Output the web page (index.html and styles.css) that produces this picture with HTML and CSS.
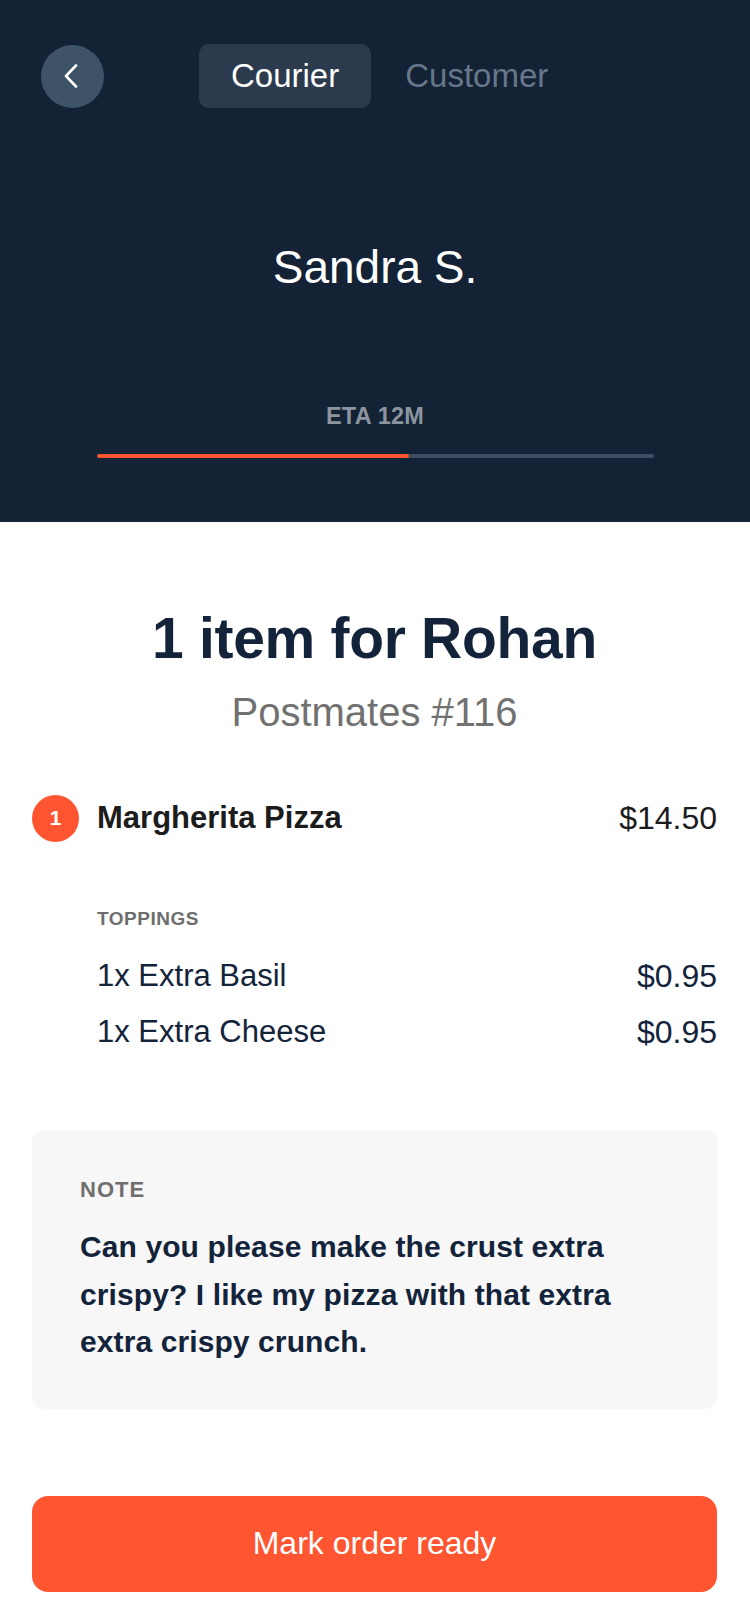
FILE: index.html
```html
<!DOCTYPE html>
<html lang="en">
<head>
<meta charset="utf-8">
<title>Order</title>
<link rel="stylesheet" href="styles.css">
</head>
<body>
<div class="screen">
  <header class="header">
    <div class="topbar">
      <button class="back" aria-label="Back">
        <svg width="16" height="24" viewBox="0 0 16 24"><path d="M13 1.5 L3 12 L13 22.5" fill="none" stroke="#ffffff" stroke-width="2.6" stroke-linecap="round" stroke-linejoin="round"/></svg>
      </button>
      <div class="tabs">
        <div class="tab active">Courier</div>
        <div class="tab">Customer</div>
      </div>
    </div>
    <div class="name">Sandra S.</div>
    <div class="eta">ETA 12M</div>
    <div class="progress"><div class="progress-fill" style="width:56%"></div></div>
  </header>

  <main class="main">
    <h1 class="title">1 item for Rohan</h1>
    <div class="subtitle">Postmates #116</div>

    <div class="item">
      <div class="badge">1</div>
      <div class="item-name">Margherita Pizza</div>
      <div class="item-price">$14.50</div>
    </div>

    <div class="toppings">
      <div class="section-label">TOPPINGS</div>
      <div class="topping"><span>1x Extra Basil</span><span class="tprice">$0.95</span></div>
      <div class="topping"><span>1x Extra Cheese</span><span class="tprice">$0.95</span></div>
    </div>

    <div class="note">
      <div class="note-label">NOTE</div>
      <p class="note-text">Can you please make the crust extra crispy? I like my pizza with that extra extra crispy crunch.</p>
    </div>

    <button class="cta">Mark order ready</button>
  </main>
</div>
</body>
</html>
```

FILE: styles.css
```css
* { box-sizing: border-box; }
html, body { margin: 0; padding: 0; }
body {
  font-family: "Liberation Sans", Arial, sans-serif;
  background: #ffffff;
  width: 750px;
}
.screen { width: 750px; min-height: 1624px; background: #fff; }

.header {
  background: #132234;
  height: 522px;
  padding-top: 44px;
}
.topbar {
  display: flex;
  align-items: center;
  padding-left: 41px;
  height: 64px;
}
.back {
  width: 63px;
  height: 63px;
  border-radius: 50%;
  background: #3e5368;
  border: none;
  padding: 0 4px 0 0;
  display: flex;
  align-items: center;
  justify-content: center;
}
.tabs {
  display: flex;
  gap: 2px;
  margin-left: 95px;
}
.tab {
  height: 64px;
  padding: 0 32px;
  border-radius: 10px;
  font-size: 33px;
  line-height: 64px;
  color: #66778a;
}
.tab.active {
  background: #2b3a4d;
  color: #ffffff;
}
.name {
  margin-top: 131px;
  text-align: center;
  color: #ffffff;
  font-size: 46px;
  line-height: 56px;
}
.eta {
  margin-top: 106px;
  text-align: center;
  color: #8b949f;
  font-size: 23.5px;
  font-weight: 700;
  line-height: 30px;
  letter-spacing: 0.2px;
}
.progress {
  margin: 23px 96px 0 97px;
  height: 4px;
  border-radius: 2px;
  background: #3d4f63;
  overflow: hidden;
}
.progress-fill {
  height: 100%;
  background: #ff5530;
  border-radius: 2px;
}

.main {
  padding: 0 33px 0 32px;
}
.title {
  margin: 82px 0 0;
  text-align: center;
  font-size: 57px;
  line-height: 68px;
  font-weight: 700;
  color: #13233a;
  letter-spacing: -0.3px;
}
.subtitle {
  margin-top: 16px;
  text-align: center;
  font-size: 40px;
  line-height: 48px;
  color: #717171;
}
.item {
  margin-top: 58px;
  display: flex;
  align-items: center;
  height: 48px;
}
.badge {
  width: 47px;
  height: 47px;
  border-radius: 50%;
  background: #ff5530;
  color: #fff;
  font-weight: 700;
  font-size: 21px;
  display: flex;
  align-items: center;
  justify-content: center;
  flex-shrink: 0;
}
.item-name {
  margin-left: 18px;
  font-size: 31px;
  font-weight: 700;
  color: #1c1c1c;
  line-height: 48px;
  flex: 1;
}
.item-price {
  font-size: 32px;
  color: #1c1c1c;
  line-height: 48px;
}
.toppings {
  margin-top: 65px;
  padding-left: 65px;
}
.section-label {
  font-size: 19px;
  font-weight: 700;
  line-height: 24px;
  color: #6e6e6e;
  letter-spacing: 0.5px;
  margin-bottom: 17px;
}
.topping {
  display: flex;
  justify-content: space-between;
  font-size: 31px;
  line-height: 56px;
  color: #13233a;
}
.tprice { font-size: 32px; }

.note {
  margin-top: 70px;
  background: #f7f7f7;
  border-radius: 12px;
  padding: 46px 48px 43px 48px;
}
.note-label {
  font-size: 22px;
  font-weight: 700;
  line-height: 28px;
  color: #6e6e6e;
  letter-spacing: 1px;
}
.note-text {
  margin: 19px 0 0;
  font-size: 30px;
  font-weight: 700;
  line-height: 47.5px;
  color: #13233a;
  letter-spacing: 0.1px;
}
.cta {
  display: block;
  width: 100%;
  margin-top: 87px;
  height: 96px;
  border: none;
  border-radius: 16px;
  background: #ff5530;
  color: #ffffff;
  font-family: "Liberation Sans", Arial, sans-serif;
  font-size: 32px;
}
```
